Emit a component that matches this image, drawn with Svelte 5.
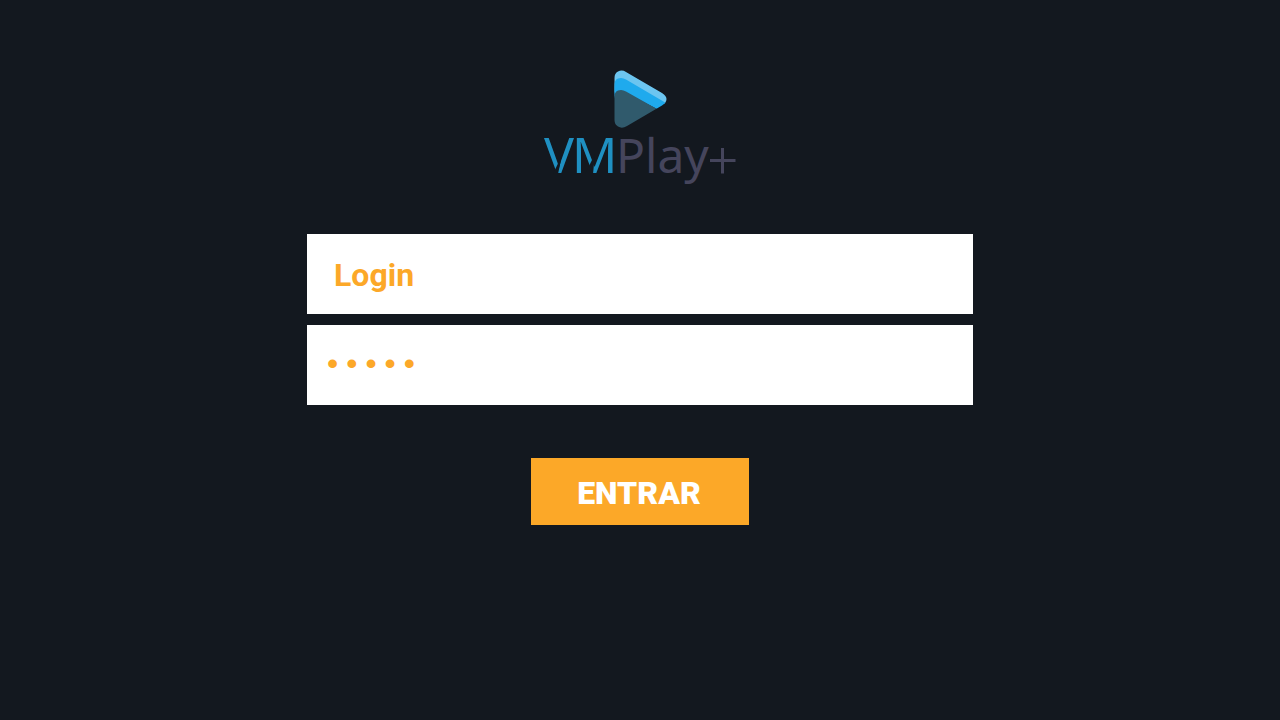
<script lang="ts">
	let login = $state('');
	let password = $state('');

	function handleSubmit(e: SubmitEvent) {
		e.preventDefault();
	}
</script>

<main class="page">
	<svg class="logo" width="200" height="124" viewBox="0 0 200 124" role="img" aria-label="VMPlay+">
		<defs>
			<clipPath id="play-shape">
				<path d="M74.500 15 Q74.500 10 78 8.500 Q82 6.500 86 9 L122 30 Q126.500 33 126.500 36 Q126.500 39.500 122 42.500 L87 63 Q82 66 78 63.500 Q74.500 61.500 74.500 57 Z" />
			</clipPath>
		</defs>
		<g clip-path="url(#play-shape)">
			<path d="M74 6 H128 V41 H118 L86 23 Q76 20 74 32 Z" fill="#6cc5f0" />
			<path d="M74 24 Q74 17 78 15.500 Q82 14 86 16.500 L126 40 V46 H117 L86 30 Q76 26 74 36 Z" fill="#1faaed" />
			<path d="M74 36 Q74 29 78 27.500 Q82 26 86 28.500 L117 46 V66 H74 Z" fill="#305a6c" />
		</g>
		<text class="mark" x="4" y="110">V</text>
		<text class="mark" x="32" y="110">M</text>
		<path class="cut" d="M13 111 L22 92 L18 111 Z M45 111 L55 91 L53 111 Z" />
		<text class="word" x="76" y="110">Play</text>
		<path d="M170 97.500 H195.500 M182.500 85 V110.500" stroke="#45455c" stroke-width="3" fill="none" />
	</svg>

	<form class="login-form" onsubmit={handleSubmit}>
		<input class="field" type="text" placeholder="Login" aria-label="Login" bind:value={login} />
		<input
			class="field password"
			type="password"
			placeholder="•••••"
			aria-label="Senha"
			bind:value={password}
		/>
		<button class="submit" type="submit">ENTRAR</button>
	</form>
</main>

<style>
	:global(body) {
		background: #13181f;
	}

	.page {
		box-sizing: border-box;
		min-height: 100vh;
		padding: 63px 24px;
		display: flex;
		flex-direction: column;
		align-items: center;
		font-family: Roboto, sans-serif;
	}

	.logo {
		display: block;
		overflow: visible;
	}

	.mark {
		font-family: 'Noto Sans', sans-serif;
		font-size: 50px;
		font-weight: 400;
		fill: #1f90c2;
	}

	.word {
		font-family: 'Noto Sans', sans-serif;
		font-size: 48px;
		font-weight: 400;
		fill: #45455c;
	}

	.cut {
		fill: #13181f;
	}

	.login-form {
		width: 100%;
		max-width: 666px;
		margin-top: 47px;
		display: flex;
		flex-direction: column;
		align-items: center;
		gap: 11px;
	}

	.field {
		box-sizing: border-box;
		width: 100%;
		height: 80px;
		padding: 2px 27px 0;
		border: none;
		border-radius: 0;
		outline: none;
		background: #fff;
		color: #fca828;
		font-family: inherit;
		font-size: 32px;
		font-weight: 700;
	}
	.field::placeholder {
		color: #fca828;
		opacity: 1;
	}

	.password {
		padding: 0 16px;
		font-family: 'Liberation Mono', monospace;
		font-weight: 400;
	}

	.submit {
		width: 218px;
		height: 67px;
		margin-top: 42px;
		padding: 2px 2px 0 0;
		border: none;
		background: #fca828;
		color: #fff;
		font-family: inherit;
		font-size: 32px;
		font-weight: 900;
		cursor: pointer;
	}
	.submit:hover {
		background: #f59d14;
	}
</style>
